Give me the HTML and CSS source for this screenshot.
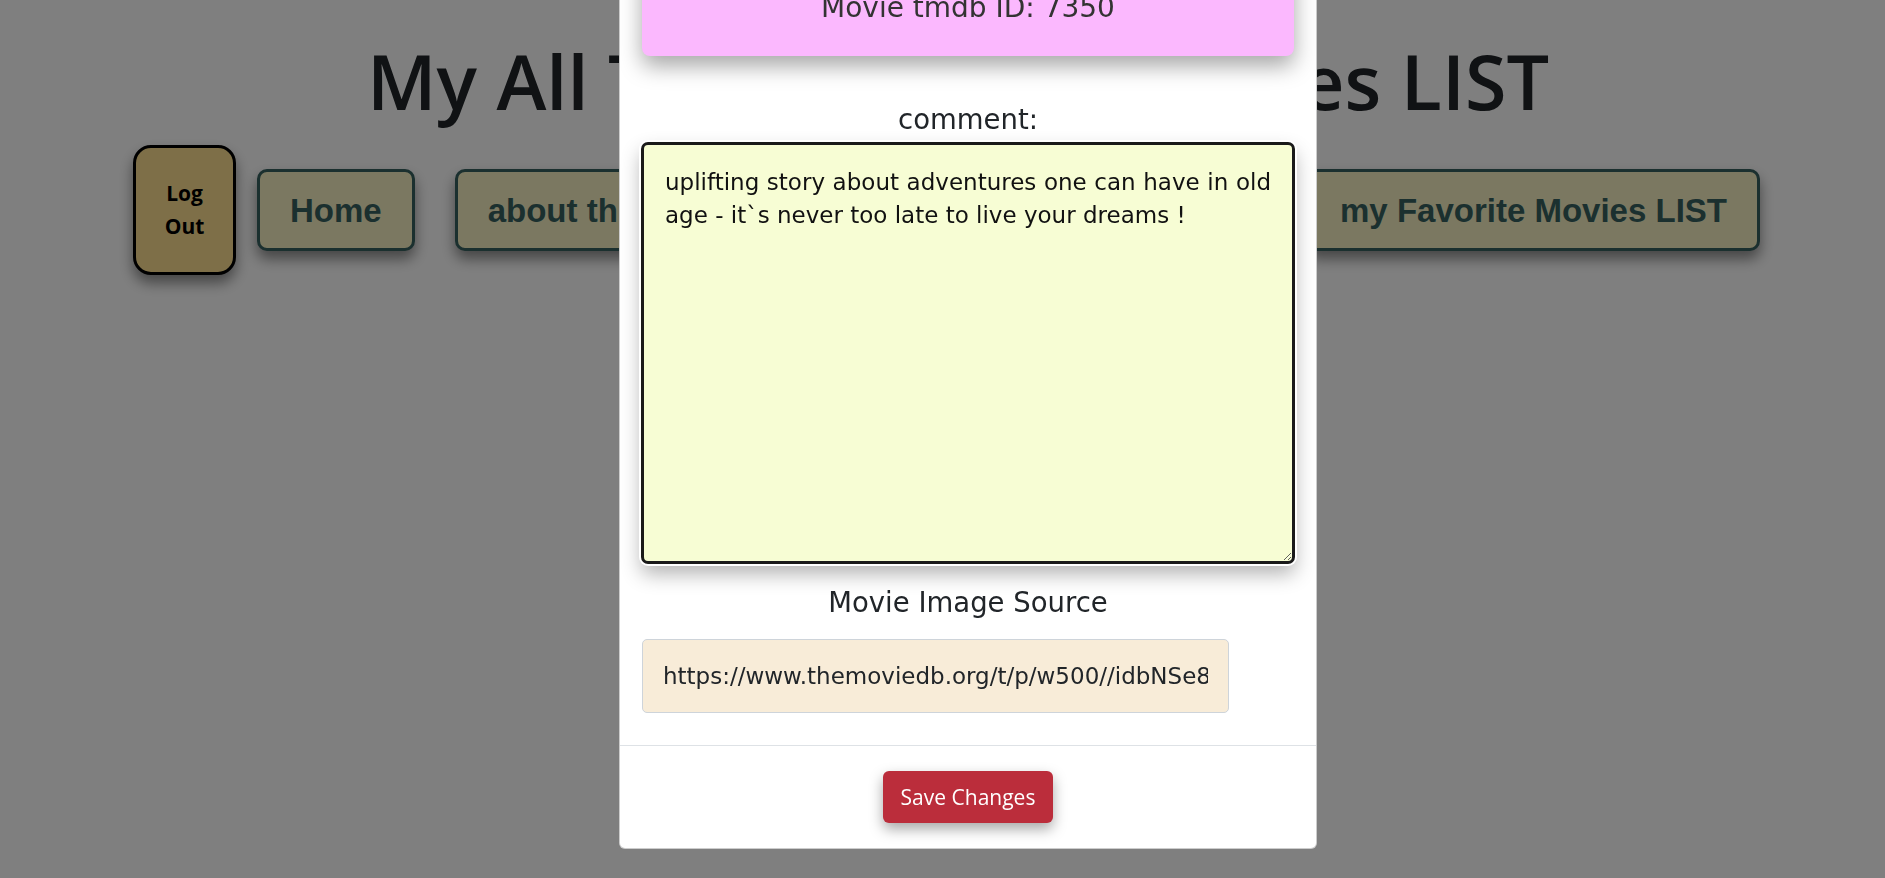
FILE: index.html
```html
<!DOCTYPE html>
<html lang="en">
<head>
<meta charset="utf-8">
<title>My All Time Favorite Movies LIST</title>
<link rel="stylesheet" href="styles.css">
</head>
<body>
  <h1 class="title">My All Time Favorite Movies LIST</h1>
  <nav class="nav">
    <div class="nav-left">
      <button class="logout">Log Out</button>
      <button class="nav-btn home">Home</button>
      <button class="nav-btn about">about this site</button>
    </div>
    <button class="nav-btn">search Movies</button>
    <button class="nav-btn">my Favorite Movies LIST</button>
  </nav>

  <div class="backdrop"></div>

  <div class="modal">
    <div class="modal-content">
      <div class="modal-body">
        <div class="tmdb">Movie tmdb ID: 7350</div>
        <label class="label label-comment" for="comment">comment:</label>
        <textarea id="comment" class="comment">uplifting story about adventures one can have in old age - it`s never too late to live your dreams !</textarea>
        <label class="label label-src" for="src">Movie Image Source</label>
        <input id="src" class="img-src" type="text" value="https://www.themoviedb.org/t/p/w500//idbNSe8JIyNuHJyTQYBbTLCIs6m.jpg">
      </div>
      <div class="modal-footer">
        <button class="save">Save Changes</button>
      </div>
    </div>
  </div>
</body>
</html>
```

FILE: styles.css
```css
* {
  box-sizing: border-box;
}

html,
body {
  margin: 0;
  height: 100%;
}

body {
  font-family: "Open Sans", "Noto Sans", sans-serif;
  color: #212529;
  background: #ffffff;
  overflow: hidden;
}

.title {
  margin: 34px 0 0;
  padding-left: 31px;
  font-size: 75.5px;
  font-weight: 600;
  line-height: 94px;
  text-align: center;
  color: #212529;
  white-space: nowrap;
}

.nav {
  display: flex;
  justify-content: space-between;
  align-items: center;
  margin-top: 17px;
  padding: 0 125px 0 133px;
}

.nav-left {
  display: flex;
  align-items: center;
}

.logout {
  width: 103px;
  height: 130px;
  padding: 0 18px;
  border: 3px solid #000000;
  border-radius: 18px;
  background: #fcdf90;
  color: #000000;
  font-family: "Open Sans", "Noto Sans", sans-serif;
  font-size: 21px;
  font-weight: 700;
  line-height: 33px;
  text-align: center;
  box-shadow: 0 8px 14px rgba(0, 0, 0, 0.45);
}

.nav-btn {
  display: flex;
  align-items: center;
  height: 82px;
  padding: 0 30px;
  border: 3px solid #36605f;
  border-radius: 10px;
  background: #f6f0c2;
  color: #36605f;
  font-family: "Liberation Sans", Arial, sans-serif;
  font-size: 33px;
  font-weight: 700;
  line-height: 1;
  white-space: nowrap;
  box-shadow: 0 8px 14px rgba(0, 0, 0, 0.45);
}

.home {
  margin-left: 21px;
}

.about {
  margin-left: 40px;
}

.backdrop {
  position: fixed;
  inset: 0;
  background: rgba(0, 0, 0, 0.5);
}

.modal {
  position: fixed;
  inset: 0;
  overflow: hidden;
}

.modal-content {
  position: absolute;
  left: 619px;
  top: -62px;
  width: 698px;
  background: #ffffff;
  border: 1px solid rgba(0, 0, 0, 0.2);
  border-radius: 6px;
}

.modal-body {
  padding: 16px 21px 32px;
}

.tmdb {
  margin: 0 1px;
  padding: 32px 10px 28px;
  background: #fbb8fe;
  border-radius: 8px;
  box-shadow: 0 10px 22px rgba(0, 0, 0, 0.35);
  font-family: "DejaVu Sans", Verdana, sans-serif;
  font-size: 28px;
  line-height: 41px;
  color: #333333;
  text-align: center;
}

.label {
  display: block;
  font-family: "DejaVu Sans", Verdana, sans-serif;
  font-size: 27.5px;
  line-height: 34px;
  text-align: center;
  color: #212529;
}

.label-comment {
  margin: 45.5px 0 6.5px;
}

.label-src {
  margin: 20.5px 0 20.5px;
}

.comment {
  display: block;
  width: 100%;
  height: 422px;
  margin: 0;
  padding: 21px;
  border: 3px solid #1a1a1a;
  border-radius: 7px;
  background: #f7fdd4;
  color: #111111;
  font-family: "DejaVu Sans", Verdana, sans-serif;
  font-size: 23px;
  line-height: 33px;
  text-align: justify;
  box-shadow: 0 0 0 2px #ffffff, 0 10px 20px rgba(0, 0, 0, 0.3);
  outline: none;
}

.img-src {
  display: block;
  width: 587px;
  height: 74px;
  margin: 0 0 0 1px;
  padding: 0 20px;
  border: 1px solid #ced4da;
  border-radius: 5px;
  background: #f8ecd8;
  color: #212529;
  font-family: "DejaVu Sans", Verdana, sans-serif;
  font-size: 23px;
  outline: none;
}

.modal-footer {
  display: flex;
  justify-content: center;
  padding: 25px 0;
  border-top: 1px solid #dee2e6;
}

.save {
  height: 52px;
  padding: 0 18px;
  border: 0;
  border-radius: 6px;
  background: #bb2d3b;
  color: #ffffff;
  font-family: "Open Sans", "Noto Sans", sans-serif;
  font-size: 21px;
  line-height: 1;
  box-shadow: 0 6px 14px rgba(0, 0, 0, 0.35);
}
```
